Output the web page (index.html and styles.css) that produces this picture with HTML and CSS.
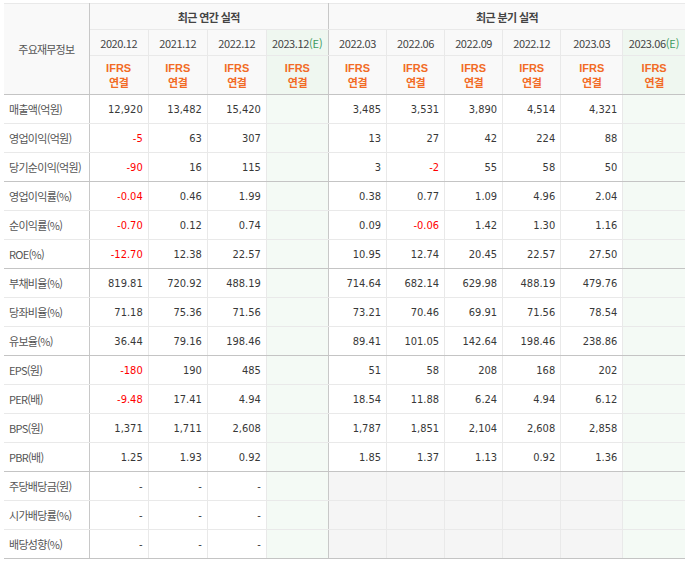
FILE: index.html
```html
<!DOCTYPE html>
<html lang="ko">
<head>
<meta charset="utf-8">
<title>주요재무정보</title>
<link rel="stylesheet" href="styles.css">
</head>
<body>
<div class="wrap">
<table class="fin">
  <colgroup>
    <col class="c-lbl">
    <col class="c-y"><col class="c-y"><col class="c-y"><col class="c-e">
    <col class="c-q"><col class="c-q"><col class="c-q"><col class="c-q"><col class="c-e"><col class="c-e">
  </colgroup>
  <thead>
    <tr class="h1">
      <th rowspan="3" class="lbl-h">주요재무정보</th>
      <th colspan="4" class="grp ydiv">최근 연간 실적</th>
      <th colspan="6" class="grp">최근 분기 실적</th>
    </tr>
    <tr class="h2">
      <th>2020.12</th><th>2021.12</th><th>2022.12</th><th class="est ydiv">2023.12<span class="e">(E)</span></th>
      <th>2022.03</th><th>2022.06</th><th>2022.09</th><th>2022.12</th><th>2023.03</th><th class="est">2023.06<span class="e">(E)</span></th>
    </tr>
    <tr class="h3">
      <th><span class="ifrs">IFRS</span><span class="yk">연결</span></th>
      <th><span class="ifrs">IFRS</span><span class="yk">연결</span></th>
      <th><span class="ifrs">IFRS</span><span class="yk">연결</span></th>
      <th class="est ydiv"><span class="ifrs">IFRS</span><span class="yk">연결</span></th>
      <th><span class="ifrs">IFRS</span><span class="yk">연결</span></th>
      <th><span class="ifrs">IFRS</span><span class="yk">연결</span></th>
      <th><span class="ifrs">IFRS</span><span class="yk">연결</span></th>
      <th><span class="ifrs">IFRS</span><span class="yk">연결</span></th>
      <th><span class="ifrs">IFRS</span><span class="yk">연결</span></th>
      <th class="est"><span class="ifrs">IFRS</span><span class="yk">연결</span></th>
    </tr>
  </thead>
  <tbody>
    <tr><td>매출액(억원)</td><td>12,920</td><td>13,482</td><td>15,420</td><td class="est ydiv"></td><td>3,485</td><td>3,531</td><td>3,890</td><td>4,514</td><td>4,321</td><td class="est"></td></tr>
    <tr><td>영업이익(억원)</td><td class="neg">-5</td><td>63</td><td>307</td><td class="est ydiv"></td><td>13</td><td>27</td><td>42</td><td>224</td><td>88</td><td class="est"></td></tr>
    <tr class="sep"><td>당기순이익(억원)</td><td class="neg">-90</td><td>16</td><td>115</td><td class="est ydiv"></td><td>3</td><td class="neg">-2</td><td>55</td><td>58</td><td>50</td><td class="est"></td></tr>
    <tr><td>영업이익률(%)</td><td class="neg">-0.04</td><td>0.46</td><td>1.99</td><td class="est ydiv"></td><td>0.38</td><td>0.77</td><td>1.09</td><td>4.96</td><td>2.04</td><td class="est"></td></tr>
    <tr><td>순이익률(%)</td><td class="neg">-0.70</td><td>0.12</td><td>0.74</td><td class="est ydiv"></td><td>0.09</td><td class="neg">-0.06</td><td>1.42</td><td>1.30</td><td>1.16</td><td class="est"></td></tr>
    <tr class="sep"><td>ROE(%)</td><td class="neg">-12.70</td><td>12.38</td><td>22.57</td><td class="est ydiv"></td><td>10.95</td><td>12.74</td><td>20.45</td><td>22.57</td><td>27.50</td><td class="est"></td></tr>
    <tr><td>부채비율(%)</td><td>819.81</td><td>720.92</td><td>488.19</td><td class="est ydiv"></td><td>714.64</td><td>682.14</td><td>629.98</td><td>488.19</td><td>479.76</td><td class="est"></td></tr>
    <tr><td>당좌비율(%)</td><td>71.18</td><td>75.36</td><td>71.56</td><td class="est ydiv"></td><td>73.21</td><td>70.46</td><td>69.91</td><td>71.56</td><td>78.54</td><td class="est"></td></tr>
    <tr class="sep"><td>유보율(%)</td><td>36.44</td><td>79.16</td><td>198.46</td><td class="est ydiv"></td><td>89.41</td><td>101.05</td><td>142.64</td><td>198.46</td><td>238.86</td><td class="est"></td></tr>
    <tr><td>EPS(원)</td><td class="neg">-180</td><td>190</td><td>485</td><td class="est ydiv"></td><td>51</td><td>58</td><td>208</td><td>168</td><td>202</td><td class="est"></td></tr>
    <tr><td>PER(배)</td><td class="neg">-9.48</td><td>17.41</td><td>4.94</td><td class="est ydiv"></td><td>18.54</td><td>11.88</td><td>6.24</td><td>4.94</td><td>6.12</td><td class="est"></td></tr>
    <tr><td>BPS(원)</td><td>1,371</td><td>1,711</td><td>2,608</td><td class="est ydiv"></td><td>1,787</td><td>1,851</td><td>2,104</td><td>2,608</td><td>2,858</td><td class="est"></td></tr>
    <tr class="sep"><td>PBR(배)</td><td>1.25</td><td>1.93</td><td>0.92</td><td class="est ydiv"></td><td>1.85</td><td>1.37</td><td>1.13</td><td>0.92</td><td>1.36</td><td class="est"></td></tr>
    <tr><td>주당배당금(원)</td><td>-</td><td>-</td><td>-</td><td class="est ydiv"></td><td class="na"></td><td class="na"></td><td class="na"></td><td class="na"></td><td class="na"></td><td class="est"></td></tr>
    <tr><td>시가배당률(%)</td><td>-</td><td>-</td><td>-</td><td class="est ydiv"></td><td class="na"></td><td class="na"></td><td class="na"></td><td class="na"></td><td class="na"></td><td class="est"></td></tr>
    <tr class="last"><td>배당성향(%)</td><td>-</td><td>-</td><td>-</td><td class="est ydiv"></td><td class="na"></td><td class="na"></td><td class="na"></td><td class="na"></td><td class="na"></td><td class="est"></td></tr>
  </tbody>
</table>
</div>
</body>
</html>
```
FILE: styles.css
```css
html, body {
  margin: 0;
  padding: 0;
  background: #fff;
}
.wrap {
  padding: 3px 0 0 4px;
}
.fin {
  border-collapse: collapse;
  table-layout: fixed;
  width: 681px;
  font-family: "Noto Sans CJK KR", "Noto Sans", sans-serif;
  font-size: 11px;
  color: #444;
  border-top: 1px solid #c8c8c8;
  border-bottom: 1px solid #c4c4c4;
}
.c-lbl { width: 85px; }
.c-y { width: 59px; }
.c-q { width: 58px; }
.c-e { width: 62px; }

.fin th, .fin td {
  border: 1px solid #e9e9e9;
  padding: 0;
  overflow: hidden;
  white-space: nowrap;
}
.fin th:last-child, .fin td:last-child { border-right: none; }
.fin td:first-child, .fin th.lbl-h { border-left: none; }

.fin thead th {
  background: #f9f9f9;
  font-weight: normal;
  text-align: center;
  color: #444;
}
.fin th.lbl-h {
  letter-spacing: -0.8px;
  color: #555;
  border-right-color: #c8c8c8;
  border-bottom-color: #c4c4c4;
}
.fin tr.h1 th { height: 25px; }
.fin tr.h1 th.grp {
  font-weight: bold;
  letter-spacing: -0.6px;
}
.fin tr.h2 th { height: 25px; letter-spacing: -0.4px; }
.fin tr.h3 th {
  height: 38px;
  color: #f26b25;
  border-bottom-color: #c4c4c4;
}
.fin .ifrs {
  display: block;
  font-family: "Liberation Sans", Arial, sans-serif;
  font-weight: bold;
  font-size: 11px;
  line-height: 13px;
  padding-top: 1px;
}
.fin .yk {
  display: block;
  font-weight: bold;
  font-size: 11px;
  line-height: 15px;
  letter-spacing: -0.5px;
}
.fin thead th.est { background: #eff7f0; }
.fin .e { color: #3d9b5e; letter-spacing: 0; }

.fin .ydiv { border-right-color: #c8c8c8 !important; }

.fin tbody td {
  height: 28px;
  text-align: right;
  padding-right: 5px;
  font-family: "DejaVu Sans Condensed", "DejaVu Sans", sans-serif;
  font-size: 11px;
  color: #383838;
}
.fin tbody td:first-child {
  text-align: left;
  padding-left: 5px;
  padding-right: 0;
  font-family: "Noto Sans CJK KR", "Noto Sans", sans-serif;
  letter-spacing: -0.7px;
  color: #555;
  border-right-color: #c8c8c8;
}
.fin tbody td.neg { color: #f00; }
.fin tbody td.est { background: #f4faf5; }
.fin tbody td.na { background: #f5f5f5; }
.fin tbody tr.sep td { border-bottom-color: #c4c4c4; }
.fin tbody tr.last td { border-bottom-color: #c4c4c4; }
```
